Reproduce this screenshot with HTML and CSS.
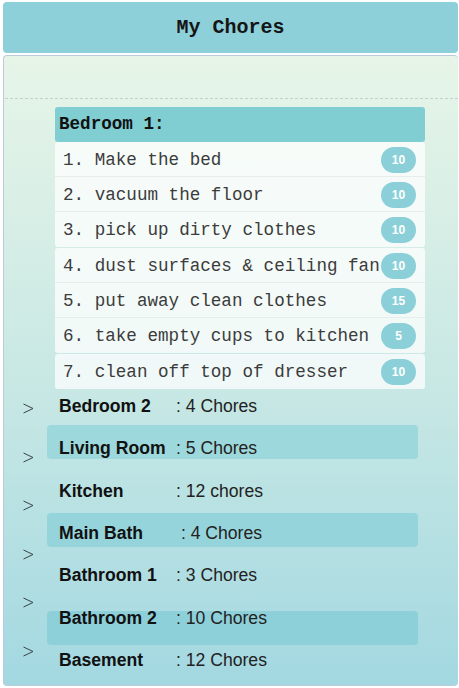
FILE: index.html
```html
<!DOCTYPE html>
<html>
<head>
<meta charset="utf-8">
<title>My Chores</title>
<link rel="stylesheet" href="styles.css">
</head>
<body>
<header class="top-bar"><h1 class="title">My Chores</h1></header>
<main class="panel">
  <div class="divider"></div>
  <section class="room-card">
    <div class="room-head">Bedroom 1:</div>
    <ul class="chore-group">
      <li class="chore"><span class="chore-text">1. Make the bed</span><span class="badge">10</span></li>
      <li class="chore"><span class="chore-text">2. vacuum the floor</span><span class="badge">10</span></li>
      <li class="chore"><span class="chore-text">3. pick up dirty clothes</span><span class="badge">10</span></li>
    </ul>
    <ul class="chore-group">
      <li class="chore"><span class="chore-text">4. dust surfaces &amp; ceiling fan</span><span class="badge">10</span></li>
      <li class="chore"><span class="chore-text">5. put away clean clothes</span><span class="badge">15</span></li>
      <li class="chore"><span class="chore-text">6. take empty cups to kitchen</span><span class="badge">5</span></li>
    </ul>
    <ul class="chore-group">
      <li class="chore"><span class="chore-text">7. clean off top of dresser</span><span class="badge">10</span></li>
    </ul>
  </section>
  <section class="rooms">
    <div class="bands">
      <div class="band band-a"></div>
      <div class="band band-b"></div>
      <div class="band band-c"></div>
    </div>
    <div class="chevrons">
      <div class="chev"><svg width="11" height="11" viewBox="0 0 11 11"><polyline points="0.5,1 10,5.5 0.5,10" fill="none" stroke="#3a4448" stroke-width="1"/></svg></div>
      <div class="chev"><svg width="11" height="11" viewBox="0 0 11 11"><polyline points="0.5,1 10,5.5 0.5,10" fill="none" stroke="#3a4448" stroke-width="1"/></svg></div>
      <div class="chev"><svg width="11" height="11" viewBox="0 0 11 11"><polyline points="0.5,1 10,5.5 0.5,10" fill="none" stroke="#3a4448" stroke-width="1"/></svg></div>
      <div class="chev"><svg width="11" height="11" viewBox="0 0 11 11"><polyline points="0.5,1 10,5.5 0.5,10" fill="none" stroke="#3a4448" stroke-width="1"/></svg></div>
      <div class="chev"><svg width="11" height="11" viewBox="0 0 11 11"><polyline points="0.5,1 10,5.5 0.5,10" fill="none" stroke="#3a4448" stroke-width="1"/></svg></div>
      <div class="chev"><svg width="11" height="11" viewBox="0 0 11 11"><polyline points="0.5,1 10,5.5 0.5,10" fill="none" stroke="#3a4448" stroke-width="1"/></svg></div>
    </div>
    <div class="room-rows">
      <div class="room-row"><span class="room-name">Bedroom 2</span><span class="room-count">: 4 Chores</span></div>
      <div class="room-row"><span class="room-name">Living Room</span><span class="room-count">: 5 Chores</span></div>
      <div class="room-row"><span class="room-name">Kitchen</span><span class="room-count">: 12 chores</span></div>
      <div class="room-row"><span class="room-name">Main Bath</span><span class="room-count">&nbsp;: 4 Chores</span></div>
      <div class="room-row"><span class="room-name">Bathroom 1</span><span class="room-count">: 3 Chores</span></div>
      <div class="room-row"><span class="room-name">Bathroom 2</span><span class="room-count">: 10 Chores</span></div>
      <div class="room-row"><span class="room-name">Basement</span><span class="room-count">: 12 Chores</span></div>
    </div>
  </section>
</main>
</body>
</html>
```

FILE: styles.css
```css
* { box-sizing: border-box; }
html, body { margin: 0; padding: 0; }
body {
  width: 459px;
  height: 688px;
  overflow: hidden;
  background: #ffffff;
  font-family: "Liberation Sans", Arial, sans-serif;
}
.top-bar {
  margin: 2px 1px 0 3px;
  height: 51px;
  background: #8dd0da;
  border-radius: 4px;
  display: flex;
  align-items: center;
  justify-content: center;
}
.title {
  margin: 0;
  font-family: "Liberation Mono", "Courier New", monospace;
  font-weight: bold;
  font-size: 20px;
  color: #151515;
  padding-bottom: 1px;
}
.panel {
  margin: 2px 1px 0 3px;
  height: 631px;
  border: 1px solid #bccbdc;
  border-right: none;
  border-radius: 4px;
  background: linear-gradient(to bottom, #e7f5e8 0%, #c6e7e4 55%, #a3d8e1 100%);
  overflow: hidden;
}
.divider {
  margin: 42px 0 0 -4px;
  border-top: 1px dashed #c6d0cc;
}
.room-card {
  margin: 8px 0 0 51px;
  width: 370px;
}
.room-head {
  height: 35px;
  background: #80cdd2;
  border-radius: 3px;
  padding-left: 4px;
  font-family: "Liberation Mono", "Courier New", monospace;
  font-weight: bold;
  font-size: 17.6px;
  line-height: 35px;
  color: #111;
}
.chore-group {
  list-style: none;
  margin: 0 0 1px 0;
  padding: 0;
  border-radius: 3px;
  overflow: hidden;
}
.chore {
  height: 35px;
  display: flex;
  align-items: center;
  justify-content: space-between;
  padding: 1px 9px 0 8px;
  background: rgba(255, 255, 255, 0.74);
  border-bottom: 1px solid #e6eeec;
}
.chore:last-child { border-bottom: none; }
.chore-text {
  font-family: "Liberation Mono", "Courier New", monospace;
  font-size: 17.6px;
  color: #3c3c3c;
  white-space: pre;
}
.badge {
  flex: none;
  width: 35px;
  height: 26px;
  border-radius: 13px;
  background: #8bd0d8;
  color: #fff;
  font-family: "Liberation Sans", Arial, sans-serif;
  font-weight: bold;
  font-size: 12px;
  display: flex;
  align-items: center;
  justify-content: center;
}
.rooms {
  display: grid;
}
.bands, .chevrons, .room-rows {
  grid-area: 1 / 1;
}
.bands {
  padding-left: 43px;
}
.band {
  width: 371px;
  height: 34px;
  border-radius: 4px;
}
.band-a { margin-top: 35px; background: #9dd8dc; }
.band-b { margin-top: 54px; background: #96d4db; }
.band-c { margin-top: 64px; background: #8ed0da; }
.chevrons {
  padding-left: 19px;
}
.chev {
  height: 48.6px;
  padding-top: 13px;
}
.chev svg { display: block; }
.room-rows {
  padding-left: 55px;
}
.room-row {
  height: 42.33px;
  line-height: 33px;
  font-size: 17.6px;
  display: flex;
}
.room-name {
  width: 117px;
  font-weight: bold;
  color: #111;
}
.room-count {
  color: #222;
  white-space: pre;
}
```
